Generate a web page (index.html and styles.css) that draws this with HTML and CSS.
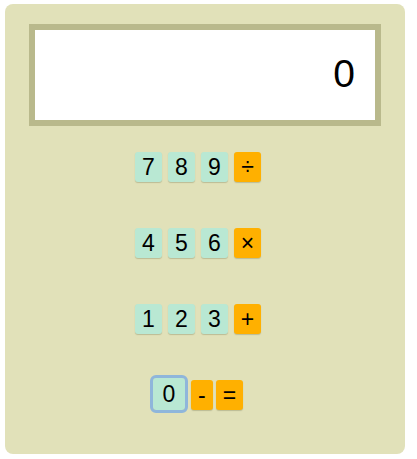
FILE: index.html
```html
<!DOCTYPE html>
<html>
<head>
<meta charset="utf-8">
<link rel="stylesheet" href="styles.css">
</head>
<body>
<div class="calc">
  <div class="display">0</div>
  <div class="keys">
    <div class="row">
      <button class="key num">7</button>
      <button class="key num">8</button>
      <button class="key num">9</button>
      <button class="key op">÷</button>
    </div>
    <div class="row">
      <button class="key num">4</button>
      <button class="key num">5</button>
      <button class="key num">6</button>
      <button class="key op">×</button>
    </div>
    <div class="row">
      <button class="key num">1</button>
      <button class="key num">2</button>
      <button class="key num">3</button>
      <button class="key op">+</button>
    </div>
    <div class="row row-last">
      <button class="key num zero">0</button>
      <button class="key op minus">-</button>
      <button class="key op">=</button>
    </div>
  </div>
</div>
</body>
</html>
```
FILE: styles.css
```css
html, body {
  margin: 0;
  padding: 0;
  background: #ffffff;
}
body {
  font-family: "Liberation Sans", Arial, sans-serif;
}
.calc {
  margin: 4px 0 0 5px;
  width: 400px;
  height: 450px;
  box-sizing: border-box;
  background: #e1e1b9;
  border-radius: 8px;
  padding: 20px 24px 0 24px;
}
.display {
  height: 102px;
  box-sizing: border-box;
  border: 6px solid #b9b98c;
  background: #ffffff;
  color: #000;
  font-size: 39px;
  line-height: 88px;
  text-align: right;
  padding-right: 20px;
}
.keys {
  display: flex;
  flex-direction: column;
  gap: 46px;
  padding-top: 26px;
  padding-right: 14px;
}
.row {
  display: flex;
  justify-content: center;
  gap: 6px;
  height: 30px;
}
.key {
  border: none;
  margin: 0;
  height: 30px;
  padding: 0 7px;
  min-width: 27px;
  border-radius: 3px;
  font-family: "Liberation Sans", Arial, sans-serif;
  font-size: 23px;
  line-height: 30px;
  color: #000;
  box-shadow: 0 1px 1px rgba(120, 120, 80, 0.35);
}
.num {
  background: #b9e8d3;
}
.op {
  background: #ffb000;
}
.minus {
  min-width: 22px;
}
.row-last {
  gap: 3px;
}
.zero {
  width: 32px;
  height: 32px;
  margin: -2px 3px 0 0;
  outline: 3px solid #8fb6db;
  outline-offset: 0;
}
```
